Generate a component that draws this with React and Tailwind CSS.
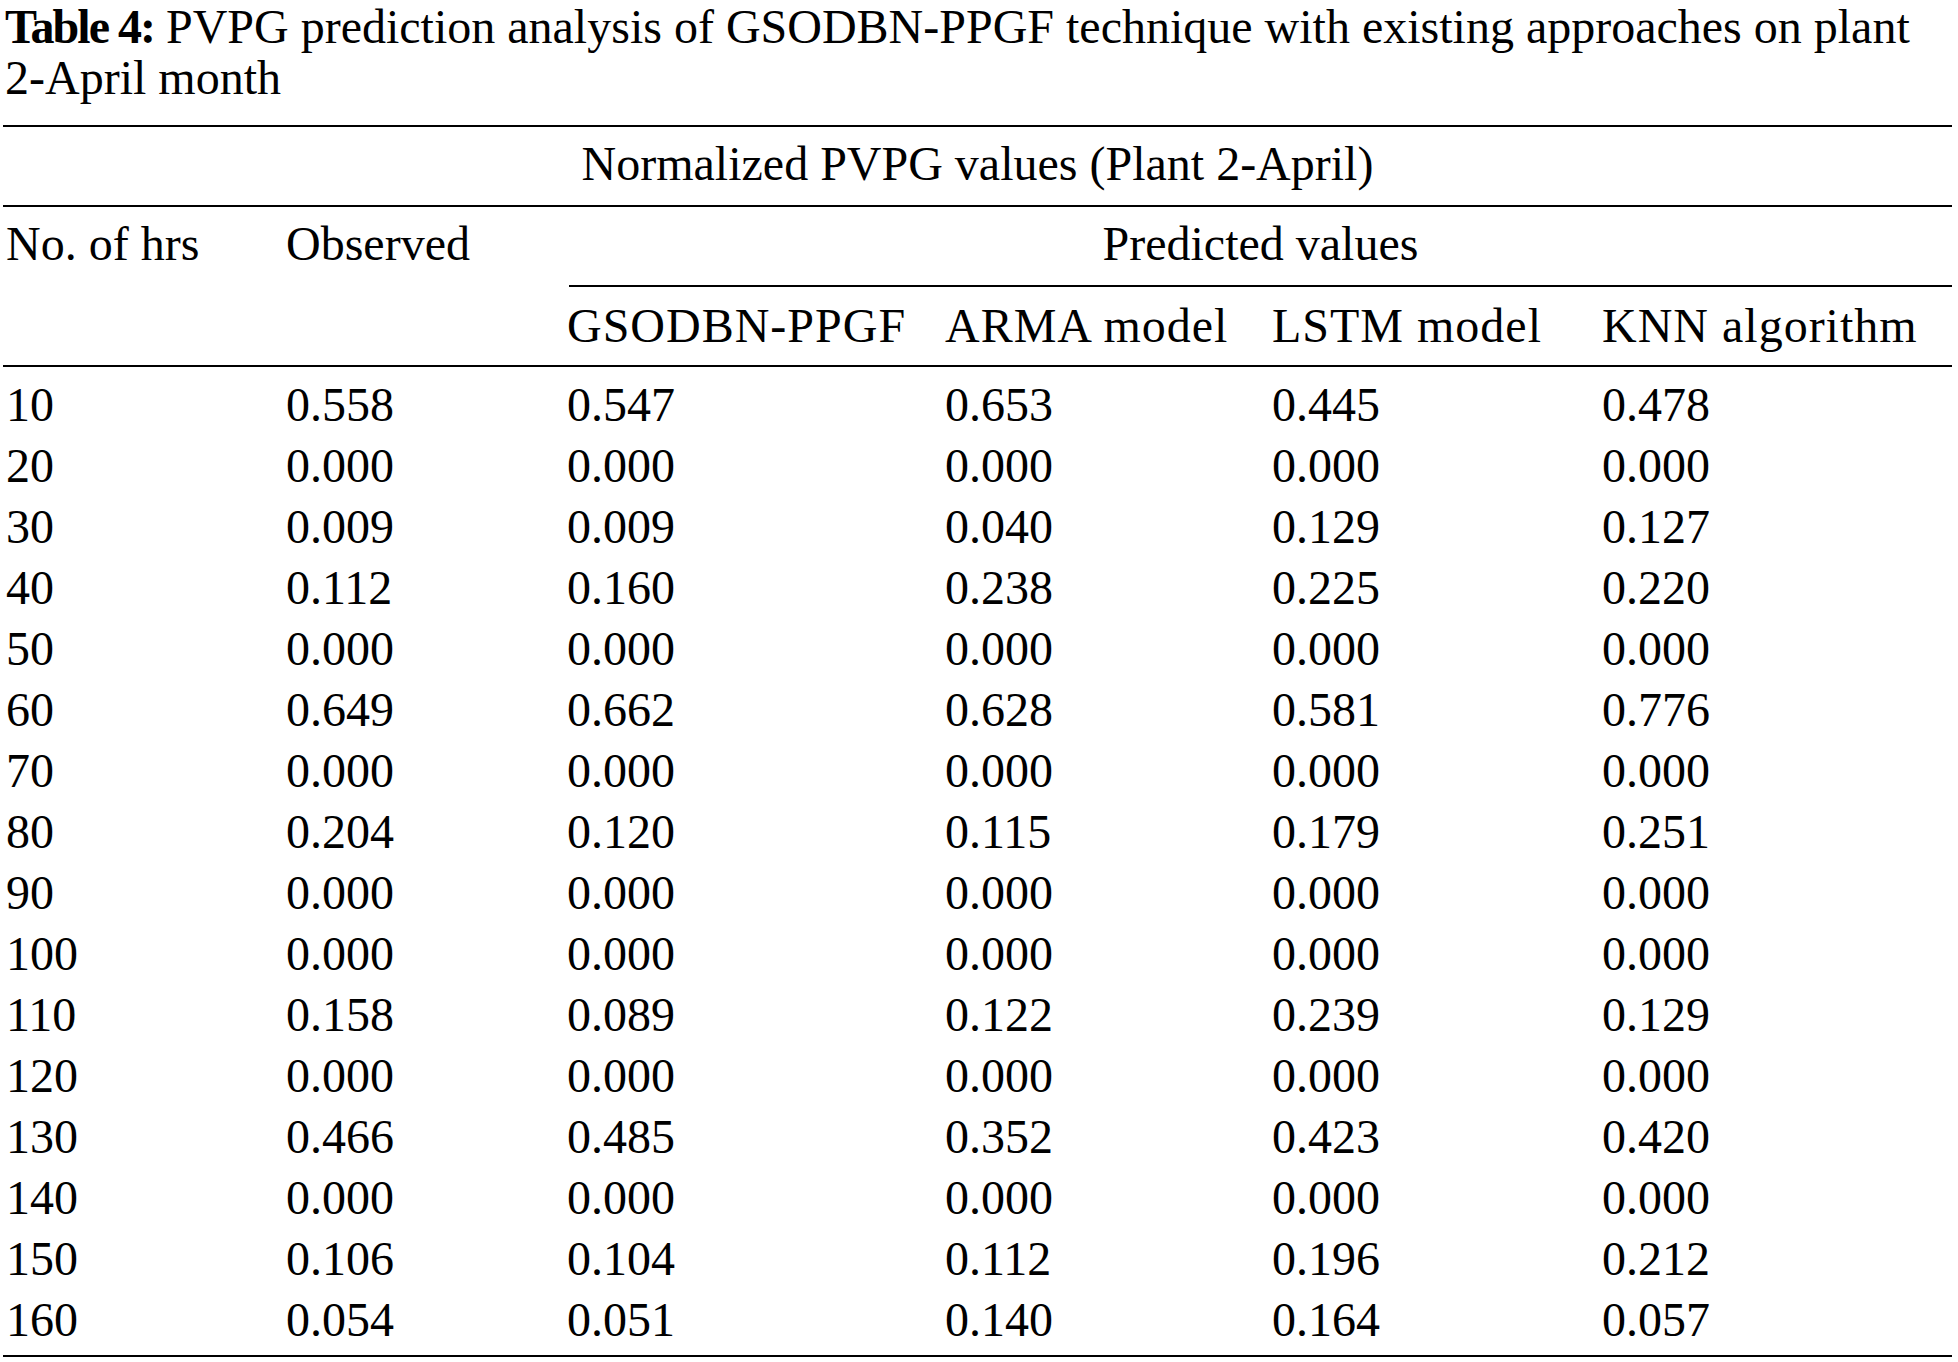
const rows = [
  ['10', '0.558', '0.547', '0.653', '0.445', '0.478'],
  ['20', '0.000', '0.000', '0.000', '0.000', '0.000'],
  ['30', '0.009', '0.009', '0.040', '0.129', '0.127'],
  ['40', '0.112', '0.160', '0.238', '0.225', '0.220'],
  ['50', '0.000', '0.000', '0.000', '0.000', '0.000'],
  ['60', '0.649', '0.662', '0.628', '0.581', '0.776'],
  ['70', '0.000', '0.000', '0.000', '0.000', '0.000'],
  ['80', '0.204', '0.120', '0.115', '0.179', '0.251'],
  ['90', '0.000', '0.000', '0.000', '0.000', '0.000'],
  ['100', '0.000', '0.000', '0.000', '0.000', '0.000'],
  ['110', '0.158', '0.089', '0.122', '0.239', '0.129'],
  ['120', '0.000', '0.000', '0.000', '0.000', '0.000'],
  ['130', '0.466', '0.485', '0.352', '0.423', '0.420'],
  ['140', '0.000', '0.000', '0.000', '0.000', '0.000'],
  ['150', '0.106', '0.104', '0.112', '0.196', '0.212'],
  ['160', '0.054', '0.051', '0.140', '0.164', '0.057'],
]

const methods = ['GSODBN-PPGF', 'ARMA model', 'LSTM model', 'KNN algorithm']

const cols = 'grid grid-cols-[280px_281px_378px_327px_330px_1fr]'

const App = () => {
  return (
    <div className="min-h-screen overflow-hidden bg-white text-[48px] leading-[53px] text-black font-['Liberation_Serif','Times_New_Roman',serif]">
      {/* caption, two lines */}
      <div className="pl-[5px] whitespace-nowrap">
        <p className="leading-[54px]">
          <span className="font-bold tracking-[-2px]">Table 4:</span> PVPG prediction analysis of GSODBN-PPGF technique with existing approaches on plant
        </p>
        <p className="leading-[48px]">2-April month</p>
      </div>

      <div className="mt-[23px] ml-[3px] w-[1949px] border-t-2 border-b-2 border-black">
        {/* head */}
        <div className="h-[80px] border-b-2 border-black pt-[10px] text-center">
          Normalized PVPG values (Plant 2-April)
        </div>
        <div className={`${cols} border-b-2 border-black`}>
          <div className="row-span-2 pl-[3px] pt-[10px]">No. of hrs</div>
          <div className="row-span-2 pl-[3px] pt-[10px]">Observed</div>
          <div className="col-span-4 ml-[5px] h-[80px] border-b-2 border-black pt-[10px] text-center">
            Predicted values
          </div>
          {methods.map((m) => (
            <div key={m} className="h-[78px] whitespace-nowrap pl-[3px] pt-[12px] tracking-[1px]">
              {m}
            </div>
          ))}
        </div>

        {/* body */}
        <div className="pb-[12px]">
          {rows.map((r) => (
            <div key={r[0]} className={`${cols} h-[61px] pt-[11px]`}>
              {r.map((v, i) => (
                <div key={i} className="pl-[3px]">
                  {v}
                </div>
              ))}
            </div>
          ))}
        </div>
      </div>
    </div>
  )
}

export default App
